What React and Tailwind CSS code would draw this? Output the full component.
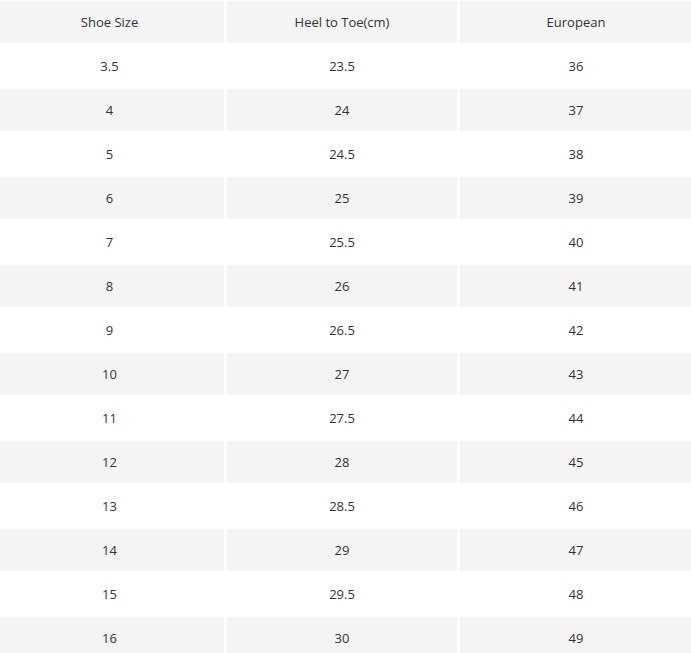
import React from "react";

const rows = [
  ["3.5", "23.5", "36"],
  ["4", "24", "37"],
  ["5", "24.5", "38"],
  ["6", "25", "39"],
  ["7", "25.5", "40"],
  ["8", "26", "41"],
  ["9", "26.5", "42"],
  ["10", "27", "43"],
  ["11", "27.5", "44"],
  ["12", "28", "45"],
  ["13", "28.5", "46"],
  ["14", "29", "47"],
  ["15", "29.5", "48"],
  ["16", "30", "49"],
];

function Row({ cells, gray }) {
  return (
    <div className="grid grid-cols-[229px_230px_232px] gap-x-[3px] h-[44px] py-[1px]">
      {cells.map((c, i) => (
        <div
          key={i}
          className={`flex items-center justify-center pt-[2px] ${gray ? "bg-[#f4f4f4]" : "bg-white"}`}
        >
          {c}
        </div>
      ))}
    </div>
  );
}

export default function App() {
  return (
    <div className="w-[691px] h-[653px] overflow-hidden bg-white">
      <div
        className="-ml-[5px] w-[697px] text-[13px] text-[#333]"
        style={{ fontFamily: '"Open Sans", "Noto Sans", sans-serif' }}
      >
        <Row cells={["Shoe Size", "Heel to Toe(cm)", "European"]} gray />
        {rows.map((r, i) => (
          <Row key={i} cells={r} gray={i % 2 === 1} />
        ))}
      </div>
    </div>
  );
}
